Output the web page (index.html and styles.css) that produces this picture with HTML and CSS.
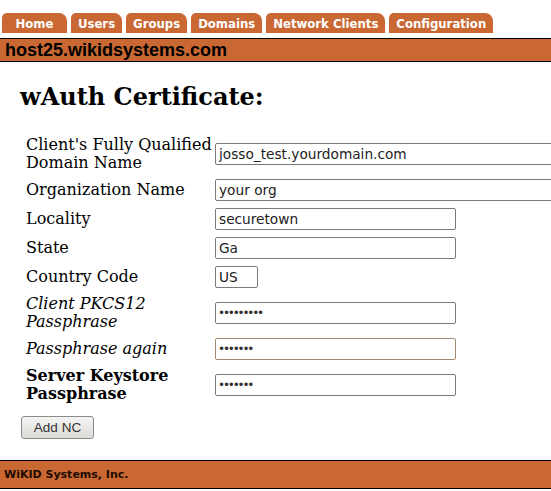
FILE: index.html
```html
<!DOCTYPE html>
<html lang="en">
<head>
    <meta charset="UTF-8">
    <title>wAuth Certificate</title>
    <link rel="stylesheet" href="styles.css">
</head>
<body>
    <ul class="tabs">
        <li class="home"><a href="#">Home</a></li>
        <li><a href="#">Users</a></li>
        <li><a href="#">Groups</a></li>
        <li><a href="#">Domains</a></li>
        <li><a href="#">Network Clients</a></li>
        <li><a href="#">Configuration</a></li>
    </ul>
    <div class="hostbar">host25.wikidsystems.com</div>

    <div class="content">
        <h1>wAuth Certificate:</h1>
        <form>
            <table class="form-table">
                <tr>
                    <td class="label">Client's Fully Qualified Domain Name</td>
                    <td><input type="text" class="wide" value="josso_test.yourdomain.com"></td>
                </tr>
                <tr>
                    <td class="label">Organization Name</td>
                    <td><input type="text" class="wide" value="your org"></td>
                </tr>
                <tr>
                    <td class="label">Locality</td>
                    <td><input type="text" class="medium" value="securetown"></td>
                </tr>
                <tr>
                    <td class="label">State</td>
                    <td><input type="text" class="medium" value="Ga"></td>
                </tr>
                <tr>
                    <td class="label">Country Code</td>
                    <td><input type="text" class="small" value="US"></td>
                </tr>
                <tr>
                    <td class="label"><i>Client PKCS12 Passphrase</i></td>
                    <td><input type="password" class="medium" value="123456789"></td>
                </tr>
                <tr>
                    <td class="label"><i>Passphrase again</i></td>
                    <td><input type="password" class="medium focused" value="1234567"></td>
                </tr>
                <tr>
                    <td class="label"><b>Server Keystore Passphrase</b></td>
                    <td><input type="password" class="medium" value="1234567"></td>
                </tr>
            </table>
            <button type="button" class="add-nc">Add NC</button>
        </form>
    </div>

    <div class="footer">WiKID Systems, Inc.</div>
</body>
</html>
```

FILE: styles.css
```css
* {
    margin: 0;
    padding: 0;
    box-sizing: border-box;
}
body {
    font-family: 'DejaVu Sans', sans-serif;
    background-color: #fff;
    color: #000;
}
.tabs {
    list-style: none;
    display: flex;
    gap: 4px;
    padding: 13px 0 0 2px;
    height: 33px;
}
.tabs li {
    flex: none;
    background-color: #c96833;
    border-radius: 5px 8px 0 0;
    height: 20px;
}
.tabs li.home {
    min-width: 65px;
    text-align: center;
}
.tabs a {
    display: block;
    padding: 3px 7px 0 7px;
    font-weight: bold;
    font-size: 11.7px;
    line-height: 16px;
    white-space: nowrap;
    color: #fff;
    text-decoration: none;
}
.hostbar {
    margin-top: 5px;
    background-color: #c96833;
    border-top: 1px solid #000;
    border-bottom: 1px solid #000;
    height: 24px;
    padding: 0 5px;
    font-family: 'Liberation Sans', Arial, sans-serif;
    font-weight: bold;
    font-size: 18px;
    line-height: 22px;
}
.content {
    padding-left: 20px;
    overflow: hidden;
}
h1 {
    font-family: 'DejaVu Serif', serif;
    font-size: 24px;
    font-weight: bold;
    margin: 21px 0 20px 0;
    line-height: 28px;
}
.form-table {
    border-spacing: 3px;
    width: 560px;
    table-layout: fixed;
}
.form-table td {
    padding: 2px 0;
    vertical-align: middle;
}
.form-table td.label {
    width: 189px;
    padding-left: 3px;
    font-family: 'DejaVu Serif', serif;
    font-size: 16px;
    line-height: 18px;
}
.form-table input {
    height: 22px;
    border: 1px solid #7a7a7a;
    border-radius: 2px;
    padding: 0 3px;
    font-family: 'DejaVu Sans', sans-serif;
    font-size: 13.7px;
    color: #222;
}
.form-table input[type="password"] {
    font-size: 12px;
    letter-spacing: -2.2px;
    padding-left: 2px;
    color: #333;
}
.form-table input.wide {
    width: 345px;
}
.form-table input.medium {
    width: 241px;
}
.form-table input.small {
    width: 43px;
}
.form-table input.focused {
    border-color: #a08a70;
}
.add-nc {
    margin: 8px 0 0 1px;
    width: 73px;
    height: 23px;
    border: 1px solid #8a8a8a;
    border-radius: 3px;
    background: linear-gradient(#f4f4f2, #dcdbd8);
    font-size: 13.5px;
    color: #333;
}
.footer {
    margin-top: 21px;
    background-color: #c96833;
    border-top: 1px solid #000;
    border-bottom: 1px solid #000;
    height: 29px;
    padding: 0 4px;
    font-weight: bold;
    font-size: 11px;
    line-height: 27px;
    color: #1e0a00;
}
```
